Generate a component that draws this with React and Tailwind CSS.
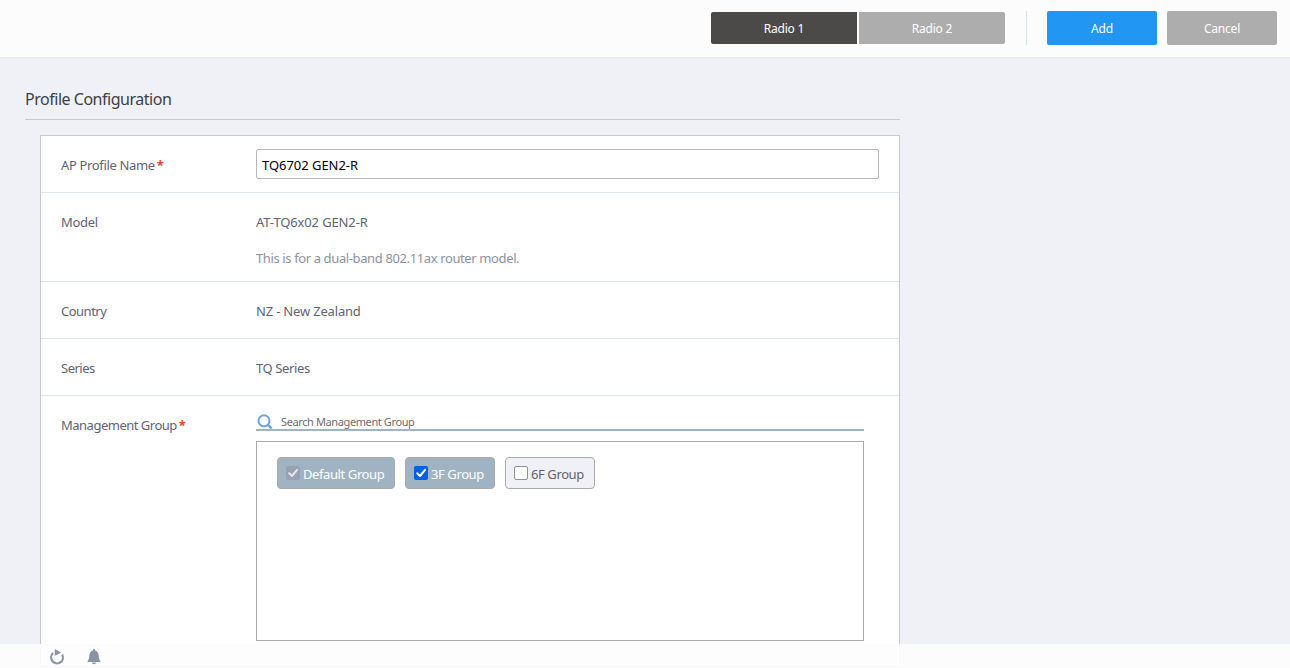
import { useState } from "react";

function Row({ label, required, tracking = "tracking-[-0.4px]", className = "h-[57px]", children }) {
  return (
    <div className={`flex border-b border-[#e1e6ea] px-5 ${className}`}>
      <div className={`w-[195px] shrink-0 pt-[19px] leading-[20px] ${tracking}`}>
        {label}
        {required && <span className="ml-0.5 font-bold text-[#e8452c]">*</span>}
      </div>
      <div className="flex-1">{children}</div>
    </div>
  );
}

function Checkbox({ checked, disabled }) {
  const box = disabled
    ? "bg-[#98a1b1]"
    : checked
      ? "bg-[#0060df]"
      : "border border-[#8f8f9d] bg-white";
  return (
    <span className={`mr-[3px] flex size-3.5 items-center justify-center rounded-xs ${box}`}>
      {checked && (
        <svg viewBox="0 0 14 14" className="size-3.5" fill="none" strokeWidth="2">
          <path
            d="M3.2 7.2L6 10L11 3.8"
            stroke={disabled ? "#e4e7ec" : "#fff"}
            strokeLinecap="round"
            strokeLinejoin="round"
          />
        </svg>
      )}
    </span>
  );
}

function GroupChip({ name, checked, disabled, width, onToggle }) {
  return (
    <button
      type="button"
      disabled={disabled}
      onClick={onToggle}
      className={`flex h-8 items-center rounded border border-[#aaa] pl-2 ${width} ${
        checked ? "bg-[#9fb3c3] text-white" : "bg-[#f0f1f6] text-[#5f6374]"
      }`}
    >
      <Checkbox checked={checked} disabled={disabled} />
      <span className="pt-1 tracking-[-0.4px] whitespace-nowrap">{name}</span>
    </button>
  );
}

export default function App() {
  const [name, setName] = useState("TQ6702 GEN2-R");
  const [groups, setGroups] = useState([
    { name: "Default Group", checked: true, disabled: true, width: "w-[118px]" },
    { name: "3F Group", checked: true, width: "w-[90px]" },
    { name: "6F Group", checked: false, width: "w-[90px]" },
  ]);

  const toggle = (i) =>
    setGroups(groups.map((g, n) => (n === i ? { ...g, checked: !g.checked } : g)));

  return (
    <div className="h-[668px] overflow-hidden bg-[#f0f1f6] font-['Noto_Sans',sans-serif] text-[13px] text-[#5f6374]">
      {/* Toolbar */}
      <header className="flex h-[58px] items-start justify-end border-b border-[#e4e6ea] bg-[#fcfcfc] pt-[11px] pr-[13px] text-xs tracking-[-0.2px] text-white">
        <div className="mt-px flex gap-0.5">
          <button className="h-8 w-[146px] rounded-l-xs bg-[#4b4a48] pt-0.5">Radio 1</button>
          <button className="h-8 w-[146px] rounded-r-xs bg-[#adadad] pt-0.5">Radio 2</button>
        </div>
        <div className="mr-5 ml-[21px] h-[34px] w-px bg-[#dde5ec]" />
        <button className="mr-2.5 h-[34px] w-[110px] rounded-xs bg-[#2196f3] pt-0.5">Add</button>
        <button className="h-[34px] w-[110px] rounded-xs bg-[#adadad] pt-0.5">Cancel</button>
      </header>

      <main className="ml-[25px] w-[875px]">
        <h1 className="h-[62px] border-b border-[#c6c8cd] pt-[29px] text-base leading-[24px] tracking-[-0.48px] text-[#3d3e45]">
          Profile Configuration
        </h1>

        <section className="mt-[15px] ml-[15px] h-[532px] border border-[#c6c8cd] bg-white">
          <Row label="AP Profile Name" required tracking="tracking-[-0.35px]">
            <input
              value={name}
              onChange={(e) => setName(e.target.value)}
              className="mt-[13px] h-[30px] w-full rounded-xs border border-[#b6b7bf] px-[5px] pt-0.5 tracking-[-0.04px] text-black outline-none"
            />
          </Row>
          <Row label="Model" tracking="tracking-[-0.3px]" className="h-[89px]">
            <p className="pt-[19px] leading-[20px] tracking-[-0.13px]">AT-TQ6x02 GEN2-R</p>
            <p className="pt-4 leading-[20px] tracking-[-0.38px] text-[#8d92a0]">
              This is for a dual-band 802.11ax router model.
            </p>
          </Row>
          <Row label="Country" tracking="tracking-[-0.5px]">
            <p className="pt-[19px] leading-[20px] tracking-[-0.18px]">NZ - New Zealand</p>
          </Row>
          <Row label="Series" tracking="tracking-[-0.5px]">
            <p className="pt-[19px] leading-[20px] tracking-[-0.38px]">TQ Series</p>
          </Row>
          <Row
            label="Management Group"
            required
            tracking="tracking-[-0.5px]"
            className="h-[270px] border-b-0"
          >
            <div className="mt-[15px] flex h-5 w-[608px] items-end border-b-2 border-[#9fb3c3]">
              <svg viewBox="0 0 16 16" className="ml-px size-4 shrink-0" fill="none" stroke="#6fa5de">
                <circle cx="7" cy="7.8" r="5.5" strokeWidth="2" />
                <path d="M11 11.8L14.6 15.4" strokeWidth="2.6" />
              </svg>
              <input
                placeholder="Search Management Group"
                className="ml-2 h-4 flex-1 pt-0.5 text-[11px] tracking-[-0.39px] outline-none placeholder:text-[#6d6d70]"
              />
            </div>
            <div className="mt-2.5 flex h-[200px] w-[608px] items-start gap-2.5 border border-[#aaa] pt-[15px] pl-5">
              {groups.map((g, i) => (
                <GroupChip key={g.name} {...g} onToggle={() => toggle(i)} />
              ))}
            </div>
          </Row>
        </section>
      </main>

      {/* Status bar */}
      <footer className="fixed inset-x-0 bottom-0 flex h-6 items-start bg-[#fdfdfd]/90 pt-[5px] pl-[49px] text-[#8c92a6]">
        <svg viewBox="0 0 16 16" className="size-4" fill="none">
          <path d="M4.2 4A5.9 5.9 0 1 0 13.2 5.6" stroke="currentColor" strokeWidth="2.2" />
          <path d="M5.8 0L12.2 3.4L5.8 6.8Z" fill="currentColor" />
        </svg>
        <svg viewBox="0 0 14 16" className="ml-[22px] h-4 w-3.5" fill="currentColor">
          <path d="M7 0C7.8 0 8.1 0.7 8.1 1.4C10.4 2 11.5 3.8 11.6 6C11.8 9.3 12.2 10.7 13.4 12V13H0.6V12C1.8 10.7 2.2 9.3 2.4 6C2.5 3.8 3.6 2 5.9 1.4C5.9 0.7 6.2 0 7 0Z" />
          <path d="M5 13.6H9A2 1.7 0 0 1 5 13.6Z" />
        </svg>
      </footer>
    </div>
  );
}
